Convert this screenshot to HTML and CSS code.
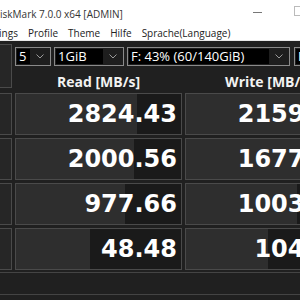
FILE: index.html
```html
<!DOCTYPE html>
<html>
<head>
  <title>CrystalDiskMark</title>
  <link rel="stylesheet" href="styles.css">
</head>
<body>
  <div class="window">
    <div class="titlebar">
      <span class="title">CrystalDiskMark 7.0.0 x64 [ADMIN]</span>
      <div class="controls">
        <span class="ctl"><i class="min"></i></span>
        <span class="ctl"><i class="max"></i></span>
        <span class="ctl"></span>
      </div>
    </div>
    <div class="menubar">
      <span>File</span>
      <span>Settings</span>
      <span>Profile</span>
      <span>Theme</span>
      <span>Hilfe</span>
      <span>Sprache(Language)</span>
    </div>

    <div class="main">
      <div class="btn all">All</div>
      <div class="top">
        <div class="combos">
          <div class="combo c1"><span class="val">5</span><svg width="8" height="5" viewBox="0 0 8 5"><polyline points="0.5,0.5 4,4 7.5,0.5" fill="none" stroke="#9a9a9a"/></svg></div>
          <div class="combo c2"><span class="val">1GiB</span><svg width="8" height="5" viewBox="0 0 8 5"><polyline points="0.5,0.5 4,4 7.5,0.5" fill="none" stroke="#9a9a9a"/></svg></div>
          <div class="combo c3"><span class="val">F: 43% (60/140GiB)</span><svg width="8" height="5" viewBox="0 0 8 5"><polyline points="0.5,0.5 4,4 7.5,0.5" fill="none" stroke="#9a9a9a"/></svg></div>
          <div class="combo c4"><span class="val">MB/s</span></div>
        </div>
        <div class="heads">
          <div class="head">Read [MB/s]</div>
          <div class="head">Write [MB/s]</div>
        </div>
      </div>

      <div class="btn">SEQ1M<br>Q8T1</div>
      <div class="cell" style="--p: 73.5%">2824.43</div>
      <div class="cell" style="--p: 72%">2159.31</div>

      <div class="btn">SEQ1M<br>Q1T1</div>
      <div class="cell" style="--p: 71.7%">2000.56</div>
      <div class="cell" style="--p: 70.5%">1677.20</div>

      <div class="btn">RND4K<br>Q32T16</div>
      <div class="cell" style="--p: 66.3%">977.66</div>
      <div class="cell" style="--p: 67%">1003.85</div>

      <div class="btn">RND4K<br>Q1T1</div>
      <div class="cell" style="--p: 44.6%">48.48</div>
      <div class="cell" style="--p: 49.4%">104.26</div>

      <div class="comment"></div>
    </div>
  </div>
</body>
</html>
```

FILE: styles.css
```css
body {
  margin: 0;
  background: #202020;
  overflow: hidden;
  font-family: 'Open Sans', 'Noto Sans', sans-serif;
}

.window {
  width: 422px;
  margin-left: -60px;
}

.titlebar {
  background: #fff;
  height: 25px;
  display: flex;
  align-items: center;
}

.title {
  padding-left: 21px;
  font-size: 10px;
  color: #333;
  padding-top: 2px;
}

.controls {
  display: flex;
  margin-left: auto;
  height: 100%;
}

.ctl {
  width: 42px;
  display: flex;
  align-items: center;
  justify-content: center;
}

.min {
  width: 9px;
  height: 1px;
  background: #777;
}

.max {
  width: 8px;
  height: 8px;
  border: 1px solid #bbb;
  margin-top: -3px;
}

.menubar {
  background: #fff;
  height: 15px;
  display: flex;
  align-items: center;
  padding-left: 10px;
  font-size: 10px;
  color: #222;
  border-bottom: 1px solid #e8e8e8;
}

.menubar span {
  padding: 0 5px;
}

.main {
  display: grid;
  grid-template-columns: 72px 167px 167px;
  grid-template-rows: 46px repeat(4, 42px) 22px;
  column-gap: 3px;
  row-gap: 3px;
  padding-top: 3px;
}

.btn {
  border: 1px solid #4a4a4a;
  background: #262626;
  color: #ddd;
  font-size: 10px;
  font-weight: bold;
  display: flex;
  align-items: center;
  justify-content: center;
  text-align: center;
  line-height: 13px;
}

.all {
  height: 44px;
  box-sizing: border-box;
}

.top {
  grid-column: 2 / 4;
  display: flex;
  flex-direction: column;
}

.combos {
  display: flex;
  margin-top: 3px;
  height: 20px;
  width: 360px;
}

.combo {
  box-sizing: border-box;
  border: 1px solid #8a8a8a;
  background: #1e1e1e;
  display: flex;
  align-items: center;
  color: #fff;
  font-size: 13px;
  padding: 1px;
}

.combo .val {
  background: #000;
  height: 100%;
  display: flex;
  align-items: center;
  padding-left: 2px;
  flex: 1;
  line-height: 1;
}

.combo svg {
  margin: 0 5px 0 6px;
}

.c1 { width: 36px; }
.c2 { width: 70px; margin-left: 3px; }
.c3 { width: 163px; margin-left: 3px; }
.c4 { width: 80px; margin-left: 4px; }

.heads {
  display: grid;
  grid-template-columns: 167px 167px;
  column-gap: 3px;
  flex: 1;
}

.head {
  text-align: center;
  color: #f2f2f2;
  font-size: 14px;
  font-weight: bold;
  padding-top: 8px;
  line-height: 16px;
}

.cell {
  border: 1px solid #4a4a4a;
  background: linear-gradient(to right, #2e2e2e var(--p), #1a1a1a var(--p));
  color: #fff;
  font-family: 'DejaVu Sans', sans-serif;
  font-weight: bold;
  font-size: 24px;
  line-height: 40px;
  text-align: right;
  padding-right: 4px;
  white-space: nowrap;
}

.comment {
  grid-column: 1 / 4;
  margin-top: -1px;
  border-top: 1px solid #444;
  border-bottom: 1px solid #444;
  background: #202020;
  width: 422px;
}
```
